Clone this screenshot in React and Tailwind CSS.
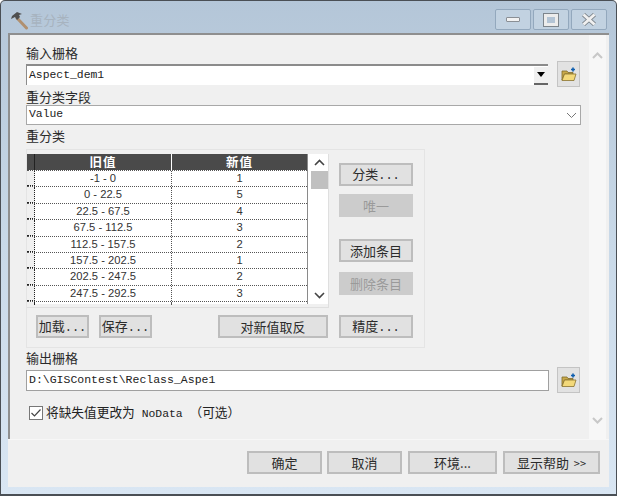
import React from 'react'

const rows = [
    ['-1 - 0', '1'],
    ['0 - 22.5', '5'],
    ['22.5 - 67.5', '4'],
    ['67.5 - 112.5', '3'],
    ['112.5 - 157.5', '2'],
    ['157.5 - 202.5', '1'],
    ['202.5 - 247.5', '2'],
    ['247.5 - 292.5', '3'],
]

const cjk = { fontFamily: '"Noto Sans CJK SC", sans-serif' }
const mono = '[font-family:"Liberation_Mono","Noto_Sans_CJK_SC",monospace]'

function Hammer() {
    return (
        <svg width="20" height="20" viewBox="0 0 20 20" className="shrink-0">
            <path d="M8 8 L17.5 18" stroke="#b09070" strokeWidth="3" strokeLinecap="round" />
            <path d="M2 9 L3 6 L8 2 L13 4 L10 5 L11 7 L8 10 L6 7 Z" fill="#4f4f4f" />
        </svg>
    )
}

function FolderIcon() {
    return (
        <svg width="16" height="15" viewBox="0 0 16 15">
            <path d="M1 4 H6 L7 5.5 H12 V7 H3.5 L1 13 Z" fill="#c9a94a" stroke="#7d6a2a" strokeWidth="0.8" />
            <path d="M3.5 7 H15 L13 13.5 H1 Z" fill="#f3d97a" stroke="#8a7330" strokeWidth="0.8" />
            <path d="M10 2.5 H14 M12 0.5 V4.5" stroke="#0f5fb0" strokeWidth="1.6" />
        </svg>
    )
}

function FolderButton() {
    return (
        <div className="w-[23px] h-[26px] bg-[#e2e2e2] border border-[#c4c4c4] flex items-center justify-center">
            <FolderIcon />
        </div>
    )
}

function Btn({ children, className = '', disabled = false }) {
    return (
        <div
            style={cjk}
            className={`h-[23px] flex items-center justify-center text-[13px] leading-[19px] border-2 ${
                disabled
                    ? 'bg-[#cccccc] border-[#cccccc] text-[#9a9a9a]'
                    : 'bg-[#e1e1e1] border-[#bdbdbd] text-[#2b2b2b]'
            } ${className}`}
        >
            <span>{children}</span>
        </div>
    )
}

function Dots() {
    return <span className={`${mono} text-[12px] text-[#2b2b2b]`}>...</span>
}

function Chevron({ up, color = '#444', width = 1.6 }) {
    return (
        <svg width="11" height="7" viewBox="0 0 11 7">
            <path d={up ? 'M1 6 L5.5 1.5 L10 6' : 'M1 1 L5.5 5.5 L10 1'} fill="none" stroke={color} strokeWidth={width} />
        </svg>
    )
}

function Label({ children, className = '' }) {
    return (
        <div style={cjk} className={`text-[13px] text-[#2b2b2b] ${className}`}>
            {children}
        </div>
    )
}

function TitleBar() {
    return (
        <div className="h-[32px] shrink-0 flex items-start pl-[8px] pr-[9px]">
            <div className="flex items-center mt-[9px]">
                <Hammer />
                <span style={cjk} className="ml-[1px] text-[13px] leading-[18px] text-[#a7b3bf] tracking-[0.3px]">重分类</span>
            </div>
            <div className="ml-auto flex gap-[2px] mt-[8px]">
                <div className="w-[36px] h-[21px] rounded-[2px] border border-[#93a8bd] bg-[#c2d2e1] flex items-center justify-center">
                    <div className="w-[14px] h-[5px] rounded-[1px] bg-[#f2f2f2] border border-[#8a8f95]" />
                </div>
                <div className="w-[36px] h-[21px] rounded-[2px] border border-[#93a8bd] bg-[#c2d2e1] flex items-center justify-center">
                    <div className="w-[14px] h-[12px] border-[3px] border-[#ececec] outline outline-[#7d858c] bg-[#b3c4d5]" />
                </div>
                <div className="w-[36px] h-[21px] rounded-[2px] border border-[#93a8bd] bg-[#c2d2e1] flex items-center justify-center">
                    <svg width="16" height="13" viewBox="0 0 16 13">
                        <path d="M2.5 1.5 L13.5 11.5 M13.5 1.5 L2.5 11.5" stroke="#7d858c" strokeWidth="4.4" />
                        <path d="M2.5 1.5 L13.5 11.5 M13.5 1.5 L2.5 11.5" stroke="#f0f0f0" strokeWidth="2.8" />
                    </svg>
                </div>
            </div>
        </div>
    )
}

function ReclassTable() {
    return (
        <div className="w-[302px] h-[154px] border-r border-b border-[#dfdfdf] flex">
            <div className="w-[281px] h-[150px] border-r border-[#8a8a8a]">
                <div className="flex h-[16px] bg-[#4a4a4a] text-white text-[12.5px] leading-[16px] font-bold" style={cjk}>
                    <div className="w-[8px] border-r border-[#222]" />
                    <div className="w-[137px] border-r border-white flex items-center justify-center tracking-[1px]">旧值</div>
                    <div className="flex-1 flex items-center justify-center tracking-[1px]">新值</div>
                </div>
                {rows.map((row) => (
                    <div key={row[0]} className="flex h-[16.4px] border-t border-dotted border-[#555] bg-white text-[11.2px] leading-[15px] text-[#333] font-['Liberation_Sans',sans-serif]">
                        <div className="w-[8px] bg-[#f0f0f0] border-r border-dotted border-r-[#222] border-b border-b-[#222]" />
                        <div className="w-[137px] border-r border-dotted border-[#555] text-center">{row[0]}</div>
                        <div className="flex-1 text-center">{row[1]}</div>
                    </div>
                ))}
                <div className="flex h-[2.8px] border-t border-dotted border-[#555] bg-white">
                    <div className="w-[8px] bg-[#f0f0f0] border-r border-dotted border-[#222]" />
                    <div className="w-[137px] border-r border-dotted border-[#555]" />
                </div>
            </div>
            <div className="w-[20px] h-[150px] bg-white pl-[3px] flex">
                <div className="w-[17px] flex flex-col items-center bg-white">
                    <div className="h-[17px] flex items-center"><Chevron up /></div>
                    <div className="w-full h-[18px] bg-[#c0c0c0]" />
                    <div className="mt-auto h-[17px] flex items-center"><Chevron /></div>
                </div>
            </div>
        </div>
    )
}

export default function App() {
    return (
        <div className="w-[617px] h-[496px] rounded-t-[5px] border border-[#4a4f55] border-b-2 bg-gradient-to-b from-[#b4c6d8] via-[#c9d9e8] to-[#d9e6f3] flex flex-col overflow-hidden">
            <TitleBar />
            <div className="flex-1 flex flex-col mx-[7px] mb-[7px] border-t-2 border-[#8f8f8f] bg-[#f0f0f0]">
                <div className="h-[405px] flex border-b border-[#f7f7f7]">
                    <div className="w-[581px] border-l-2 border-[#8f8f8f] pl-[16px] pr-[9px] pt-[9px]">
                        <Label className="h-[18px] leading-[18px]">输入栅格</Label>
                        <div className="flex items-start h-[26px]">
                            <div className="w-[522px] h-[21px] mt-[2px] bg-white border-t-2 border-l border-[#8b8b8b] flex items-center pl-[2px]">
                                <span className={`${mono} text-[11.4px] text-[#222]`}>Aspect_dem1</span>
                                <div className="ml-auto w-[14px] h-[18px] bg-[#f0f0f0] border-b-2 border-[#666] flex items-center justify-center">
                                    <div className="w-0 h-0 border-x-[4px] border-x-transparent border-t-[5px] border-t-black" />
                                </div>
                            </div>
                            <div className="ml-[9px] -mt-[1px]"><FolderButton /></div>
                        </div>
                        <Label className="h-[16px] mt-[1px] leading-[16px]">重分类字段</Label>
                        <div className="w-[555px] h-[20px] bg-white border border-[#a8a8a8] flex items-center pl-[2px] pr-[3px]">
                            <span className={`${mono} text-[11.4px] text-[#222]`}>Value</span>
                            <div className="ml-auto"><Chevron color="#777" width={1} /></div>
                        </div>
                        <Label className="h-[16px] mt-[3px] leading-[16px]">重分类</Label>
                        <div className="mt-[5px] w-[399px] h-[199px] border border-[#e4e4e4] pt-[4px]">
                            <div className="flex">
                                <ReclassTable />
                                <div className="ml-[10px] flex flex-col pt-[9px]">
                                    <Btn className="w-[74px]">分类<Dots /></Btn>
                                    <Btn disabled className="w-[74px] mt-[8px]">唯一</Btn>
                                    <Btn className="w-[74px] mt-[22px]">添加条目</Btn>
                                    <Btn disabled className="w-[74px] mt-[10px]">删除条目</Btn>
                                </div>
                            </div>
                            <div className="flex mt-[7px] pl-[9px]">
                                <Btn className="w-[53px]">加载<Dots /></Btn>
                                <Btn className="w-[53px] ml-[10px]">保存<Dots /></Btn>
                                <Btn className="w-[110px] ml-[66px]">对新值取反</Btn>
                                <Btn className="w-[74px] ml-[11px]">精度<Dots /></Btn>
                            </div>
                        </div>
                        <Label className="h-[16px] mt-[2px] leading-[16px]">输出栅格</Label>
                        <div className="flex items-center mt-[1px]">
                            <div className="w-[523px] h-[21px] bg-white border border-[#a0a0a0] flex items-center pl-[2px]">
                                <span className={`${mono} text-[11.5px] text-[#222]`}>D:\GISContest\Reclass_Aspe1</span>
                            </div>
                            <div className="ml-[8px]"><FolderButton /></div>
                        </div>
                        <div className="flex items-center mt-[9px] ml-[3px]">
                            <div className="w-[14px] h-[14px] bg-white border border-[#777] flex items-center justify-center">
                                <svg width="12" height="10" viewBox="0 0 12 10">
                                    <path d="M1.5 5 L4.5 8 L10.5 1.5" fill="none" stroke="#444" strokeWidth="1.2" />
                                </svg>
                            </div>
                            <span className={`${mono} ml-[3px] text-[11.4px] text-[#222]`}>
                                <span style={cjk} className="text-[12.7px]">将缺失值更改为</span> NoData <span style={cjk} className="text-[12.7px]">（可选）</span>
                            </span>
                        </div>
                    </div>
                    <div className="w-[17px] bg-[#f7f7f7] flex flex-col items-center pt-[17px] pb-[15px]">
                        <Chevron up color="#c8c8c8" width={2} />
                        <div className="mt-auto"><Chevron color="#c8c8c8" width={2} /></div>
                    </div>
                </div>
                <div className="flex justify-end pt-[11px] pr-[9px]">
                    <Btn className="w-[75px]">确定</Btn>
                    <Btn className="w-[75px] ml-[5px]">取消</Btn>
                    <Btn className="w-[89px] ml-[6px]">环境...</Btn>
                    <Btn className="w-[97px] ml-[6px]">显示帮助 <span className="ml-[2px] text-[11px]">&gt;&gt;</span></Btn>
                </div>
            </div>
        </div>
    )
}
